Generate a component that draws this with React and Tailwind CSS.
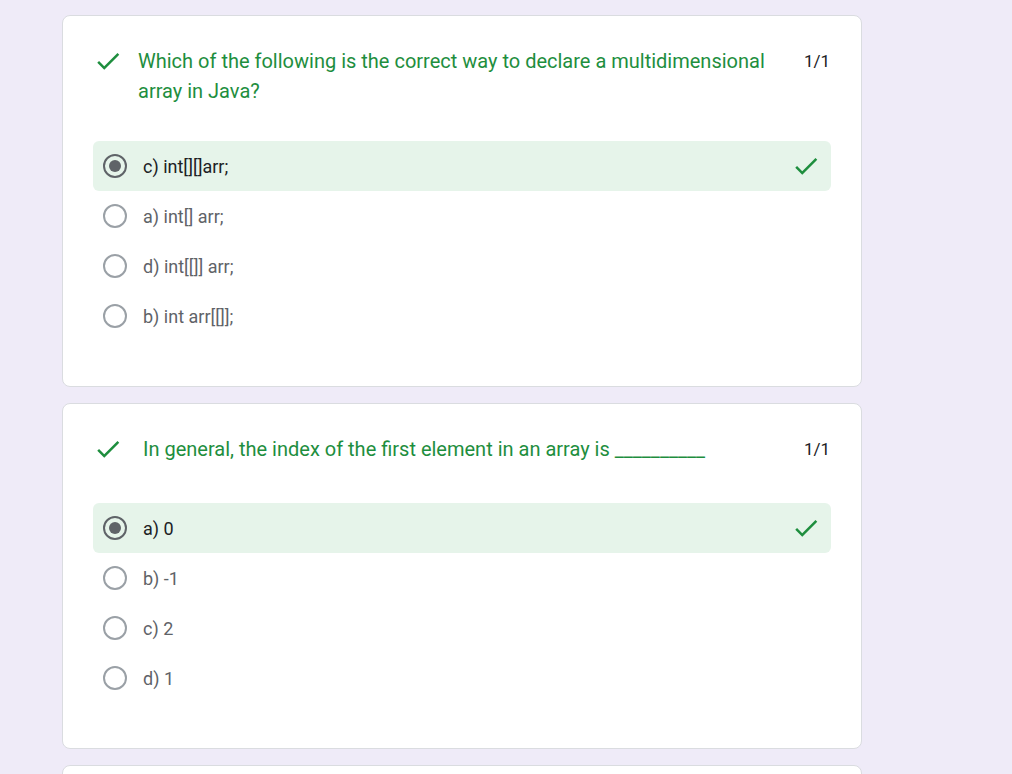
import React from "react";

const Check = ({ className = "" }) => (
  <svg viewBox="0 0 24 24" width="30" height="30" className={className}>
    <path fill="#1e8e3e" d="M9 16.17L4.83 12l-1.42 1.41L9 19 21 7l-1.41-1.41z" />
  </svg>
);

const Radio = ({ selected }) =>
  selected ? (
    <div className="w-[24px] h-[24px] rounded-full border-2 border-[#5f6368] flex items-center justify-center shrink-0">
      <div className="w-[12px] h-[12px] rounded-full bg-[#5f6368]" />
    </div>
  ) : (
    <div className="w-[24px] h-[24px] rounded-full border-2 border-[#9aa0a6] shrink-0" />
  );

const Option = ({ label, selected }) => (
  <div
    className={
      "h-[50px] flex items-center pl-[10px] pr-[10px] rounded-[6px] " +
      (selected ? "bg-[#e6f4ea]" : "")
    }
  >
    <Radio selected={selected} />
    <span
      className={
        "ml-[16px] text-[18px] flex-1 " +
        (selected ? "text-[#202124]" : "text-[#5f6368]")
      }
    >
      {label}
    </span>
    {selected && <Check />}
  </div>
);

const Card = ({ question, textMl, mt, options, className = "" }) => (
  <div
    className={
      "w-[800px] bg-white border border-[#dadce0] rounded-[8px] px-[30px] pt-[30px] pb-[45px] " +
      className
    }
  >
    <div className="flex items-start">
      <Check className="shrink-0" />
      <div
        className={"flex-1 text-[20px] leading-[30px] text-[#1e8e3e] " + textMl}
      >
        {question}
      </div>
      <div className="ml-[30px] text-[17px] leading-[30px] text-[#202124] pr-[1px]">
        1/1
      </div>
    </div>
    <div className={mt}>
      {options.map((o, i) => (
        <Option key={i} label={o} selected={i === 0} />
      ))}
    </div>
  </div>
);

export default function App() {
  return (
    <div
      className="h-screen overflow-hidden bg-[#efebf8] pl-[62px] pt-[15px] flex flex-col gap-[16px]"
      style={{ fontFamily: "Roboto, 'Liberation Sans', sans-serif" }}
    >
      <Card
        question="Which of the following is the correct way to declare a multidimensional array in Java?"
        textMl="ml-[15px]"
        mt="mt-[35px]"
        options={["c) int[][]arr;", "a) int[] arr;", "d) int[[]] arr;", "b) int arr[[]];"]}
      />
      <Card
        question="In general, the index of the first element in an array is __________"
        textMl="ml-[20px]"
        mt="mt-[39px]"
        options={["a) 0", "b) -1", "c) 2", "d) 1"]}
      />
      <div className="w-[800px] h-[120px] shrink-0 bg-white border border-[#dadce0] rounded-[8px]" />
    </div>
  );
}
